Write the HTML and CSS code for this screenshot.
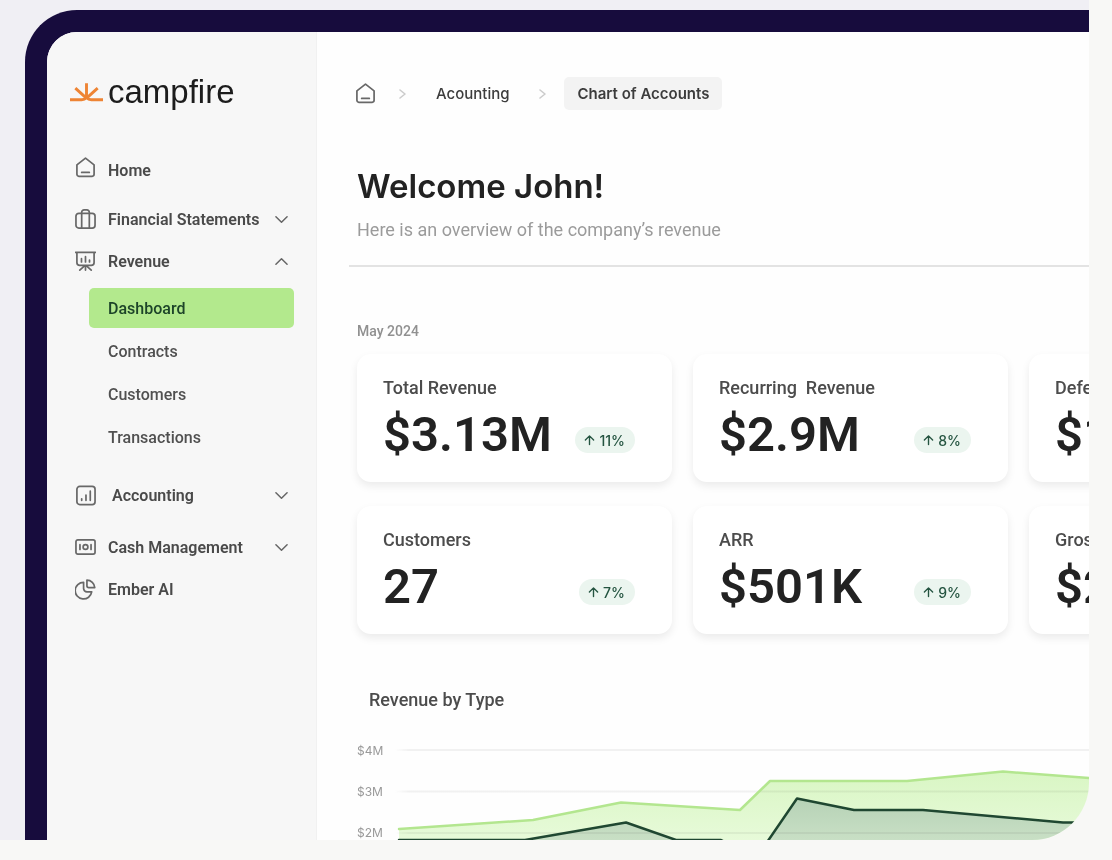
FILE: index.html
```html
<!DOCTYPE html>
<html lang="en">
<head>
    <meta charset="UTF-8">
    <meta name="viewport" content="width=device-width, initial-scale=1.0">
    <title>Campfire - Revenue Dashboard</title>
    <link rel="stylesheet" href="styles.css">
</head>
<body>
    <!-- Shared icons -->
    <svg class="sprite" aria-hidden="true">
        <symbol id="icon-home" viewBox="0 0 22 22">
            <path d="M2 8.2 11 1.2l9 7V18.2a2 2 0 0 1-2 2H4a2 2 0 0 1-2-2z"/>
            <path d="M7 16.2h8"/>
        </symbol>
        <symbol id="icon-down" viewBox="0 0 14 14">
            <path d="m1 4 6 6 6-6"/>
        </symbol>
        <symbol id="icon-up" viewBox="0 0 14 14">
            <path d="m1 10 6-6 6 6"/>
        </symbol>
        <symbol id="icon-right" viewBox="0 0 10 12">
            <path d="m2 2 5 4-5 4"/>
        </symbol>
        <symbol id="icon-arrow" viewBox="0 0 12 12">
            <path d="M6 11V1.5M1.5 6 6 1.5 10.5 6"/>
        </symbol>
    </svg>

    <div class="stage">
        <div class="device">
            <!-- Sidebar navigation -->
            <aside class="sidebar">
                <a class="logo" href="#">
                    <svg class="logo-mark" viewBox="0 0 34 22">
                        <path d="M0 19h12q3 0 5-2 2 2 5 2h12M17 2v15M5.500 7l10.500 9.500M28.500 7 18 16.500"/>
                    </svg>
                    <span class="logo-text">campfire</span>
                </a>

                <nav class="nav">
                    <a class="nav-item nav-home" href="#">
                        <svg class="icon"><use href="#icon-home"/></svg>
                        <span>Home</span>
                    </a>
                    <button class="nav-item nav-statements" type="button">
                        <svg class="icon" viewBox="0 0 22 22">
                            <rect x="1" y="4.5" width="20" height="15.5" rx="3"/>
                            <path d="M7 20V3.500a2.500 2.500 0 0 1 2.500-2.500h3A2.500 2.500 0 0 1 15 3.500V20"/>
                        </svg>
                        <span>Financial Statements</span>
                        <svg class="chevron"><use href="#icon-down"/></svg>
                    </button>
                    <button class="nav-item" type="button" aria-expanded="true">
                        <svg class="icon" viewBox="0 0 22 22">
                            <path d="M.5 1.500h21M2 1.500v10.500a3 3 0 0 0 3 3h12a3 3 0 0 0 3-3V1.500M11 15v5M10 15.500l-5 4.500M12 15.500l5 4.500M6.800 8v3.500M11 6v5.500M15.200 9.500v2"/>
                        </svg>
                        <span>Revenue</span>
                        <svg class="chevron"><use href="#icon-up"/></svg>
                    </button>
                    <div class="subnav">
                        <a class="subnav-item active" href="#">Dashboard</a>
                        <a class="subnav-item" href="#">Contracts</a>
                        <a class="subnav-item" href="#">Customers</a>
                        <a class="subnav-item" href="#">Transactions</a>
                    </div>
                    <button class="nav-item nav-accounting" type="button">
                        <svg class="icon" viewBox="0 0 22 22">
                            <rect x="2" y="1.5" width="19" height="19" rx="3"/>
                            <path d="M7 14.500v1.500M11.500 10.500V16M16 6.500V16"/>
                        </svg>
                        <span>Accounting</span>
                        <svg class="chevron"><use href="#icon-down"/></svg>
                    </button>
                    <button class="nav-item nav-cash" type="button">
                        <svg class="icon" viewBox="0 0 22 22">
                            <rect x="1" y="3" width="20" height="15" rx="2"/>
                            <circle cx="11" cy="10.5" r="2.5"/>
                            <path d="M5.200 8v5M16.800 8v5"/>
                        </svg>
                        <span>Cash Management</span>
                        <svg class="chevron"><use href="#icon-down"/></svg>
                    </button>
                    <a class="nav-item" href="#">
                        <svg class="icon" viewBox="0 0 22 22">
                            <path d="M9 3.500a8.700 8.700 0 1 0 8.500 10h-5A3.500 3.500 0 0 1 9 10z"/>
                            <path d="M12.500 1.200V7a2 2 0 0 0 2 2h6.200a8.300 8.300 0 0 0-8.200-7.800z"/>
                        </svg>
                        <span>Ember AI</span>
                    </a>
                </nav>
            </aside>

            <main class="content">
                <nav class="breadcrumb">
                    <a class="crumb-home" href="#" aria-label="Home"><svg class="icon"><use href="#icon-home"/></svg></a>
                    <svg class="separator"><use href="#icon-right"/></svg>
                    <a class="crumb" href="#">Acounting</a>
                    <svg class="separator"><use href="#icon-right"/></svg>
                    <a class="crumb current" href="#">Chart of Accounts</a>
                </nav>

                <header class="welcome">
                    <h1>Welcome John!</h1>
                    <p>Here is an overview of the company’s revenue</p>
                </header>

                <!-- Summary cards -->
                <p class="period">May 2024</p>
                <section class="cards">
                    <article class="card">
                        <h2>Total Revenue</h2>
                        <div class="card-row">
                            <strong>$3.13M</strong>
                            <span class="change"><svg><use href="#icon-arrow"/></svg>11%</span>
                        </div>
                    </article>
                    <article class="card">
                        <h2>Recurring&nbsp; Revenue</h2>
                        <div class="card-row">
                            <strong>$2.9M</strong>
                            <span class="change"><svg><use href="#icon-arrow"/></svg>8%</span>
                        </div>
                    </article>
                    <article class="card">
                        <h2>Deferred</h2>
                        <div class="card-row">
                            <strong>$1M</strong>
                        </div>
                    </article>
                    <article class="card">
                        <h2>Customers</h2>
                        <div class="card-row">
                            <strong>27</strong>
                            <span class="change"><svg><use href="#icon-arrow"/></svg>7%</span>
                        </div>
                    </article>
                    <article class="card">
                        <h2>ARR</h2>
                        <div class="card-row">
                            <strong>$501K</strong>
                            <span class="change"><svg><use href="#icon-arrow"/></svg>9%</span>
                        </div>
                    </article>
                    <article class="card">
                        <h2>Gross</h2>
                        <div class="card-row">
                            <strong>$2M</strong>
                        </div>
                    </article>
                </section>

                <!-- Revenue chart -->
                <section class="chart">
                    <h2>Revenue by Type</h2>
                    <div class="chart-body">
                        <div class="axis">
                            <span>$4M</span>
                            <span>$3M</span>
                            <span>$2M</span>
                        </div>
                        <svg class="plot" viewBox="0 0 720 140">
                            <defs>
                                <linearGradient id="fill-total" x1="0" y1="0" x2="0" y2="1">
                                    <stop offset="0" stop-color="#d9f6c4"/>
                                    <stop offset="1" stop-color="#edfce2"/>
                                </linearGradient>
                                <linearGradient id="fill-recurring" x1="0" y1="0" x2="0" y2="1">
                                    <stop offset="0" stop-color="#b6d2b6"/>
                                    <stop offset="1" stop-color="#d6e9d0"/>
                                </linearGradient>
                                <linearGradient id="grid-fade" gradientUnits="userSpaceOnUse" x1="0" y1="0" x2="14" y2="0">
                                    <stop offset="0" stop-color="#f2f2f2" stop-opacity="0"/>
                                    <stop offset="1" stop-color="#f2f2f2"/>
                                </linearGradient>
                            </defs>
                            <path fill="url(#fill-total)" d="M4 99l134-9 88-17.500 119 7.500 30-29h137l96-9.500 112 8.500V140H4z"/>
                            <path fill="url(#fill-recurring)" d="M4 110h126l101-17.500L281 110h45l20 11h20l36-52.500L459 80h69l140 12.500h52V140H4z"/>
                            <path class="grid" d="M0 19h720v2H0zM0 60.500h720v2H0zM0 102h720v2H0z"/>
                            <path class="line-total" d="M4 99l134-9 88-17.500 119 7.500 30-29h137l96-9.500 112 8.500"/>
                            <path class="line-recurring" d="M4 110h126l101-17.500L281 110h45l20 11h20l36-52.500L459 80h69l140 12.500h52"/>
                        </svg>
                    </div>
                </section>
            </main>
        </div>
    </div>
</body>
</html>
```
FILE: styles.css
```css
* {
    box-sizing: border-box;
}
body {
    font-family: 'Inter', sans-serif;
    background-color: #f8f8f6;
    color: #222;
    margin: 0;
    padding: 0 23px 20px 0;
}
h1, h2, p {
    margin: 0;
}
a {
    color: inherit;
    text-decoration: none;
}
svg {
    display: block;
    fill: none;
    stroke: currentColor;
    stroke-linecap: round;
    stroke-linejoin: round;
    flex-shrink: 0;
}
.sprite {
    position: absolute;
    width: 0;
    height: 0;
}
/* Page frame */
.stage {
    height: calc(100vh - 20px);
    padding: 10px 0 0 25px;
    background-color: #f0eff4;
    border-bottom-right-radius: 57px;
    overflow: hidden;
}
.device {
    display: flex;
    height: 100%;
    border: solid #170c3d;
    border-width: 22px 0 0 22px;
    border-top-left-radius: 52px;
    background-color: #fefefe;
    overflow: hidden;
}
/* Sidebar */
.sidebar {
    width: 270px;
    flex-shrink: 0;
    padding: 40px 22px 0 28px;
    background-color: #f7f7f7;
    border-right: 1px solid #f1f1f1;
}
.logo {
    display: flex;
    align-items: center;
    gap: 5px;
    height: 40px;
    margin-left: -5px;
}
.logo-mark {
    width: 33px;
    height: 22px;
    color: #ee8434;
    stroke-width: 3;
    stroke-linecap: butt;
}
.logo-text {
    font-family: 'Liberation Sans', sans-serif;
    font-size: 33px;
    line-height: 40px;
    color: #1c1c1c;
}
.nav {
    margin-top: 37px;
}
.nav-item {
    display: flex;
    align-items: center;
    gap: 12px;
    width: 100%;
    height: 42px;
    padding: 0 6px 0 0;
    border: none;
    background: none;
    color: #4a4a4a;
    font-family: 'Roboto', sans-serif;
    font-size: 16px;
    font-weight: 600;
    cursor: pointer;
}
.icon {
    width: 21px;
    height: 21px;
    color: #686868;
    stroke-width: 1.8;
}
.nav-home .icon {
    margin-bottom: 5px;
}
.chevron {
    width: 13px;
    height: 13px;
    margin-left: auto;
    color: #666;
    stroke-width: 1.6;
}
.nav-statements {
    margin-top: 7px;
}
.subnav {
    display: flex;
    flex-direction: column;
    gap: 3px;
    margin: 6px 0 17px 14px;
}
.subnav-item {
    height: 40px;
    padding-left: 19px;
    border-radius: 5px;
    color: #505050;
    font-family: 'Roboto', sans-serif;
    font-size: 16px;
    font-weight: 500;
    line-height: 41px;
}
.subnav-item.active {
    background-color: #b3e98d;
    color: #1d4429;
}
.nav-accounting {
    gap: 16px;
}
.nav-cash {
    margin-top: 10px;
}
/* Main content */
.content {
    flex: 1;
    min-width: 0;
    padding: 45px 0 0 40px;
    white-space: nowrap;
}
.breadcrumb {
    display: flex;
    align-items: center;
    height: 33px;
    margin-left: -2px;
}
.separator {
    width: 10px;
    height: 12px;
    margin: 0 28px 0 22px;
    color: #ccc;
    stroke-width: 1.6;
}
.crumb {
    color: #3c3c3c;
    font-size: 15px;
    font-weight: 500;
}
.crumb + .separator {
    margin: 0 16px 0 29px;
}
.current {
    padding: 0 13px;
    border-radius: 5px;
    background-color: #f3f3f3;
    font-weight: 600;
    line-height: 33px;
}
.welcome {
    margin: 56px 0 0 -8px;
    padding: 0 0 23px 8px;
    border-bottom: 2px solid #e3e3e3;
}
.welcome h1 {
    font-size: 33px;
    font-weight: 600;
    line-height: 40px;
}
.welcome p {
    margin-top: 12px;
    color: #9b9b9b;
    font-family: 'Roboto', sans-serif;
    font-size: 18px;
    line-height: 24px;
}
.period {
    margin: 54px 0 13px;
    color: #909090;
    font-family: 'Roboto', sans-serif;
    font-size: 14px;
    font-weight: 500;
    line-height: 20px;
}
/* Summary cards */
.cards {
    display: grid;
    grid-template-columns: repeat(3, 315px);
    gap: 24px 21px;
}
.card {
    height: 128px;
    padding: 22px 37px 0 26px;
    border-radius: 14px;
    background-color: #fff;
    box-shadow: 0 4px 8px rgba(0, 0, 0, 0.08);
}
.card h2, .chart h2 {
    color: #4c4c4c;
    font-family: 'Roboto', sans-serif;
    font-size: 18px;
    font-weight: 500;
    line-height: 24px;
}
.card-row {
    display: flex;
    align-items: center;
    justify-content: space-between;
    margin-top: 9px;
}
.card strong {
    font-family: 'Roboto', sans-serif;
    font-size: 49px;
    font-weight: 600;
    line-height: 52px;
}
.change {
    display: flex;
    align-items: center;
    gap: 4px;
    height: 26px;
    margin-top: 10px;
    padding: 0 10px 0 9px;
    border-radius: 13px;
    background-color: #ebf5ef;
    color: #245440;
    font-size: 14px;
    font-weight: 500;
}
.change svg {
    width: 11px;
    height: 12px;
    stroke-width: 1.5;
}
/* Revenue chart */
.chart {
    margin-top: 54px;
}
.chart h2 {
    margin-left: 12px;
}
.chart-body {
    display: flex;
    margin-top: 18px;
}
.axis {
    display: flex;
    flex-direction: column;
    flex-shrink: 0;
    width: 38px;
    color: #999;
    font-size: 12px;
    line-height: 41px;
}
.plot {
    width: 720px;
    height: 140px;
    stroke: none;
}
.grid {
    fill: url(#grid-fade);
    mix-blend-mode: multiply;
}
.line-total {
    stroke: #b3e68f;
    stroke-width: 2.5;
}
.line-recurring {
    stroke: #1f4731;
    stroke-width: 2.5;
}
```
